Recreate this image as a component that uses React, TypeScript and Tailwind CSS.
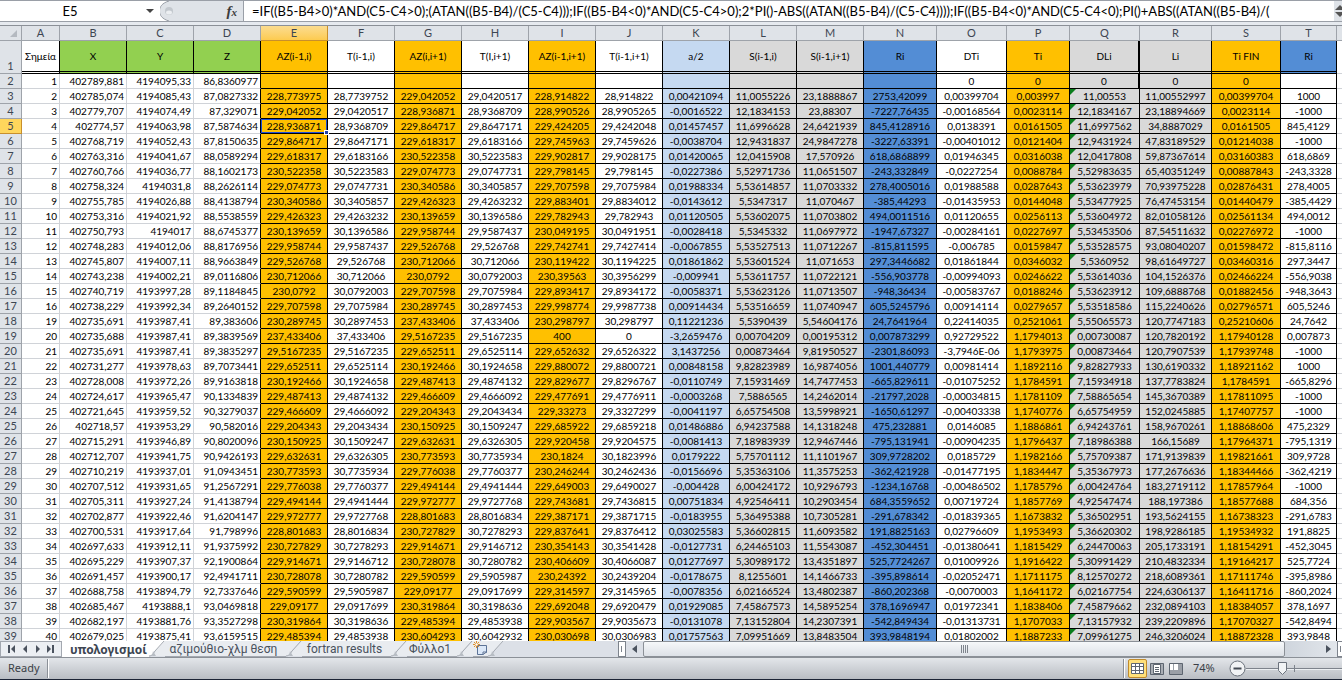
import { useState } from "react";
import clsx from "clsx";

type Column = {
  letter: string;
  title: string;
  width: string;
  fill: string;
  headFill: string;
  align: string;
};

const ORANGE = "bg-[#ffc000]";
const GREEN = "bg-[#92d050]";
const BLUE = "bg-[#538dd5]";
const PALE = "bg-[#c5d9f1]";
const GRAY = "bg-[#d9d9d9]";
const WHITE = "bg-white";

function col(letter: string, title: string, width: string, fill: string, headFill = fill, align = "text-center"): Column {
  return { letter, title, width, fill, headFill, align };
}

const columns: Column[] = [
  col("A", "Σημεία", "w-[38px]", WHITE, WHITE, "text-right"),
  col("B", "X", "w-[67px]", WHITE, GREEN, "text-right"),
  col("C", "Y", "w-[67px]", WHITE, GREEN, "text-right"),
  col("D", "Z", "w-[67px]", WHITE, GREEN, "text-right"),
  col("E", "AZ(i-1,i)", "w-[67px]", ORANGE),
  col("F", "T(i-1,i)", "w-[67px]", WHITE),
  col("G", "AZ(i,i+1)", "w-[67px]", ORANGE),
  col("H", "T(I,i+1)", "w-[67px]", WHITE),
  col("I", "AZ(i-1,i+1)", "w-[67px]", ORANGE),
  col("J", "T(i-1,i+1)", "w-[67px]", WHITE),
  col("K", "a/2", "w-[67px]", PALE),
  col("L", "S(i-1,i)", "w-[67px]", GRAY),
  col("M", "S(i-1,i+1)", "w-[67px]", GRAY),
  col("N", "Ri", "w-[73px]", BLUE),
  col("O", "DTi", "w-[70px]", WHITE),
  col("P", "Ti", "w-[63px]", ORANGE),
  col("Q", "DLi", "w-[70px]", GRAY),
  col("R", "Li", "w-[72px]", GRAY),
  col("S", "Ti FIN", "w-[69px]", ORANGE),
  col("T", "Ri", "w-[56px]", WHITE, BLUE),
];

// one line per sheet row, starting with row 2; "_" is an empty cell
const sheet = `
1 402789,881 4194095,33 86,8360977 _ _ _ _ _ _ _ _ _ _ 0 0 0 0 0 _
2 402785,074 4194085,43 87,0827332 228,773975 28,7739752 229,042052 29,0420517 228,914822 28,914822 0,00421094 11,0055226 23,1888867 2753,42099 0,00399704 0,003997 11,00553 11,00552997 0,00399704 1000
3 402779,707 4194074,49 87,329071 229,042052 29,0420517 228,936871 28,9368709 228,990526 28,9905265 -0,0016522 12,1834153 23,88307 -7227,76435 -0,00168564 0,0023114 12,1834167 23,18894669 0,0023114 -1000
4 402774,57 4194063,98 87,5874634 228,936871 28,9368709 229,864717 29,8647171 229,424205 29,4242048 0,01457457 11,6996628 24,6421939 845,4128916 0,0138391 0,0161505 11,6997562 34,8887029 0,0161505 845,4129
5 402768,719 4194052,43 87,8150635 229,864717 29,8647171 229,618317 29,6183166 229,745963 29,7459626 -0,0038704 12,9431837 24,9847278 -3227,63391 -0,00401012 0,0121404 12,9431924 47,83189529 0,01214038 -1000
6 402763,316 4194041,67 88,0589294 229,618317 29,6183166 230,522358 30,5223583 229,902817 29,9028175 0,01420065 12,0415908 17,570926 618,6868899 0,01946345 0,0316038 12,0417808 59,87367614 0,03160383 618,6869
7 402760,766 4194036,77 88,1602173 230,522358 30,5223583 229,074773 29,0747731 229,798145 29,798145 -0,0227386 5,52971736 11,0651507 -243,332849 -0,0227254 0,0088784 5,52983635 65,40351249 0,00887843 -243,3328
8 402758,324 4194031,8 88,2626114 229,074773 29,0747731 230,340586 30,3405857 229,707598 29,7075984 0,01988334 5,53614857 11,0703332 278,4005016 0,01988588 0,0287643 5,53623979 70,93975228 0,02876431 278,4005
9 402755,785 4194026,88 88,4138794 230,340586 30,3405857 229,426323 29,4263232 229,883401 29,8834012 -0,0143612 5,5347317 11,070467 -385,44293 -0,01435953 0,0144048 5,53477925 76,47453154 0,01440479 -385,4429
10 402753,316 4194021,92 88,5538559 229,426323 29,4263232 230,139659 30,1396586 229,782943 29,782943 0,01120505 5,53602075 11,0703802 494,0011516 0,01120655 0,0256113 5,53604972 82,01058126 0,02561134 494,0012
11 402750,793 4194017 88,6745377 230,139659 30,1396586 229,958744 29,9587437 230,049195 30,0491951 -0,0028418 5,5345332 11,0697972 -1947,67327 -0,00284161 0,0227697 5,53453506 87,54511632 0,02276972 -1000
12 402748,283 4194012,06 88,8176956 229,958744 29,9587437 229,526768 29,526768 229,742741 29,7427414 -0,0067855 5,53527513 11,0712267 -815,811595 -0,006785 0,0159847 5,53528575 93,08040207 0,01598472 -815,8116
13 402745,807 4194007,11 88,9663849 229,526768 29,526768 230,712066 30,712066 230,119422 30,1194225 0,01861862 5,53601524 11,071653 297,3446682 0,01861844 0,0346032 5,5360952 98,61649727 0,03460316 297,3447
14 402743,238 4194002,21 89,0116806 230,712066 30,712066 230,0792 30,0792003 230,39563 30,3956299 -0,009941 5,53611757 11,0722121 -556,903778 -0,00994093 0,0246622 5,53614036 104,1526376 0,02466224 -556,9038
15 402740,719 4193997,28 89,1184845 230,0792 30,0792003 229,707598 29,7075984 229,893417 29,8934172 -0,0058371 5,53623126 11,0713507 -948,36434 -0,00583767 0,0188246 5,53623912 109,6888768 0,01882456 -948,3643
16 402738,229 4193992,34 89,2640152 229,707598 29,7075984 230,289745 30,2897453 229,998774 29,9987738 0,00914434 5,53516659 11,0740947 605,5245796 0,00914114 0,0279657 5,53518586 115,2240626 0,02796571 605,5246
19 402735,691 4193987,41 89,383606 230,289745 30,2897453 237,433406 37,433406 230,298797 30,298797 0,11221236 5,5390439 5,54604176 24,7641964 0,22414035 0,2521061 5,55065573 120,7747183 0,25210606 24,7642
20 402735,688 4193987,41 89,3839569 237,433406 37,433406 29,5167235 29,5167235 400 0 -3,2659476 0,00704209 0,00195312 0,007873299 0,92729522 1,1794013 0,00730087 120,7820192 1,17940128 0,007873
21 402735,691 4193987,41 89,3835297 29,5167235 29,5167235 229,652511 29,6525114 229,652632 29,6526322 3,1437256 0,00873464 9,81950527 -2301,86093 -3,7946E-06 1,1793975 0,00873464 120,7907539 1,17939748 -1000
22 402731,277 4193978,63 89,7073441 229,652511 29,6525114 230,192466 30,1924658 229,880072 29,8800721 0,00848158 9,82823989 16,9874056 1001,440779 0,00981414 1,1892116 9,82827933 130,6190332 1,18921162 1000
23 402728,008 4193972,26 89,9163818 230,192466 30,1924658 229,487413 29,4874132 229,829677 29,8296767 -0,0110749 7,15931469 14,7477453 -665,829611 -0,01075252 1,1784591 7,15934918 137,7783824 1,1784591 -665,8296
24 402724,617 4193965,47 90,1334839 229,487413 29,4874132 229,466609 29,4666092 229,477691 29,4776911 -0,0003268 7,5886565 14,2462014 -21797,2028 -0,00034815 1,1781109 7,58865654 145,3670389 1,17811095 -1000
25 402721,645 4193959,52 90,3279037 229,466609 29,4666092 229,204343 29,2043434 229,33273 29,3327299 -0,0041197 6,65754508 13,5998921 -1650,61297 -0,00403338 1,1740776 6,65754959 152,0245885 1,17407757 -1000
26 402718,57 4193953,29 90,582016 229,204343 29,2043434 230,150925 30,1509247 229,685922 29,6859218 0,01486886 6,94237588 14,1318248 475,232881 0,0146085 1,1886861 6,94243761 158,9670261 1,18868606 475,2329
27 402715,291 4193946,89 90,8020096 230,150925 30,1509247 229,632631 29,6326305 229,920458 29,9204575 -0,0081413 7,18983939 12,9467446 -795,131941 -0,00904235 1,1796437 7,18986388 166,15689 1,17964371 -795,1319
28 402712,707 4193941,75 90,9426193 229,632631 29,6326305 230,773593 30,7735934 230,1824 30,1823996 0,0179222 5,75701112 11,1101967 309,9728202 0,0185729 1,1982166 5,75709387 171,9139839 1,19821661 309,9728
29 402710,219 4193937,01 91,0943451 230,773593 30,7735934 229,776038 29,7760377 230,246244 30,2462436 -0,0156696 5,35363106 11,3575253 -362,421928 -0,01477195 1,1834447 5,35367973 177,2676636 1,18344466 -362,4219
30 402707,512 4193931,65 91,2567291 229,776038 29,7760377 229,494144 29,4941444 229,649003 29,6490027 -0,004428 6,00424172 10,9296793 -1234,16768 -0,00486502 1,1785796 6,00424764 183,2719112 1,17857964 -1000
31 402705,311 4193927,24 91,4138794 229,494144 29,4941444 229,972777 29,9727768 229,743681 29,7436815 0,00751834 4,92546411 10,2903454 684,3559652 0,00719724 1,1857769 4,92547474 188,197386 1,18577688 684,356
32 402702,877 4193922,46 91,6204147 229,972777 29,9727768 228,801683 28,8016834 229,387171 29,3871715 -0,0183955 5,36495388 10,7305281 -291,678342 -0,01839365 1,1673832 5,36502951 193,5624155 1,16738323 -291,6783
33 402700,531 4193917,64 91,798996 228,801683 28,8016834 230,727829 30,7278293 229,837641 29,8376412 0,03025583 5,36602815 11,6093582 191,8825163 0,02796609 1,1953493 5,36620302 198,9286185 1,19534932 191,8825
34 402697,633 4193912,11 91,9375992 230,727829 30,7278293 229,914671 29,9146712 230,354143 30,3541428 -0,0127731 6,24465103 11,5543087 -452,304451 -0,01380641 1,1815429 6,24470063 205,1733191 1,18154291 -452,3045
35 402695,229 4193907,37 92,1900864 229,914671 29,9146712 230,728078 30,7280782 230,406609 30,4066087 0,01277697 5,30989172 13,4351897 525,7724267 0,01009926 1,1916422 5,30991429 210,4832334 1,19164217 525,7724
36 402691,457 4193900,17 92,4941711 230,728078 30,7280782 229,590599 29,5905987 230,24392 30,2439204 -0,0178675 8,1255601 14,1466733 -395,898614 -0,02052471 1,1711175 8,12570272 218,6089361 1,17111746 -395,8986
37 402688,758 4193894,79 92,7337646 229,590599 29,5905987 229,09177 29,0917699 229,314597 29,3145965 -0,0078356 6,02166524 13,4802387 -860,202368 -0,0070003 1,1641172 6,02167754 224,6306137 1,16411716 -860,2024
38 402685,467 4193888,1 93,0469818 229,09177 29,0917699 230,319864 30,3198636 229,692048 29,6920479 0,01929085 7,45867573 14,5895254 378,1696947 0,01972341 1,1838406 7,45879662 232,0894103 1,18384057 378,1697
39 402682,197 4193881,76 93,3527298 230,319864 30,3198636 229,485394 29,4853938 229,903567 29,9035673 -0,0131078 7,13152804 14,2307391 -542,849434 -0,01313731 1,1707033 7,13157932 239,2209896 1,17070327 -542,8494
40 402679,025 4193875,41 93,6159515 229,485394 29,4853938 230,604293 30,6042932 230,030698 30,0306983 0,01757563 7,09951669 13,8483504 393,9848194 0,01802002 1,1887233 7,09961275 246,3206024 1,18872328 393,9848
`;

const rows = sheet
  .trim()
  .split("\n")
  .map((line) => line.split(" ").map((v) => (v === "_" ? "" : v)));

const FORMULA =
  "=IF((B5-B4>0)*AND(C5-C4>0);(ATAN((B5-B4)/(C5-C4)));IF((B5-B4<0)*AND(C5-C4>0);2*PI()-ABS((ATAN((B5-B4)/(C5-C4))));IF((B5-B4<0)*AND(C5-C4<0);PI()+ABS((ATAN((B5-B4)/(";

function FormulaBar() {
  const [cell, setCell] = useState("E5");
  const [formula, setFormula] = useState(FORMULA);

  return (
    <div className="flex h-[26px] shrink-0 flex-col border-b border-[#8b9097] bg-[#e6eaef]">
      <div className="flex h-[22px] border-y border-[#9a9fa7] bg-[#dfe3e8] font-['Lato',sans-serif] text-[13px] leading-5 text-black">
        <div className="flex w-[160px] items-center bg-white">
          <input
            aria-label="Name box"
            value={cell}
            onChange={(e) => setCell(e.target.value)}
            className="w-[140px] bg-transparent text-center outline-none"
          />
          <button type="button" aria-label="Names" className="flex h-5 w-5 items-center justify-center">
            <svg width="8" height="4"><path d="M0 0h8L4 4z" fill="#444" /></svg>
          </button>
        </div>
        <div className="flex w-[84px] items-center justify-between border-r border-[#9a9fa7]">
          <svg width="20" height="20" viewBox="0 0 20 20">
            <path d="M0 0H9C2 2 0 5 0 10s2 8 9 10H0z" fill="#fff" />
            <path d="M9 0C2 2 -.5 6 -.5 10S2 18 9 20" fill="none" stroke="#9a9fa7" />
            <circle cx="9" cy="10" r="4" fill="#c3c8ce" />
            <ellipse cx="9" cy="11.500" rx="3" ry="2" fill="#eceff2" />
          </svg>
          <button type="button" aria-label="Insert function" className="pr-1.5 font-['Liberation_Serif',serif] text-[15px] font-bold italic leading-5 text-[#3c3c3c]">
            f<span className="text-[11px]">x</span>
          </button>
        </div>
        <input
          aria-label="Formula"
          value={formula}
          onChange={(e) => setFormula(e.target.value)}
          className="min-w-0 flex-1 bg-white pl-2 outline-none"
        />
        <div className="flex w-2 flex-col items-end justify-between bg-[#dfe3e8] py-1">
          <svg width="7" height="5"><path d="M0 5h10L5 0z" fill="#555" /></svg>
          <svg width="7" height="5"><path d="M0 0h10L5 5z" fill="#555" /></svg>
        </div>
      </div>
    </div>
  );
}

function Selection() {
  return (
    <div className="pointer-events-none absolute inset-0 border border-[#1f4fd8]">
      <span className="absolute -right-[3px] -bottom-[3px] size-[5px] border border-white bg-[#1f3fa8]" />
    </div>
  );
}

function Grid() {
  return (
    <table className="w-full table-fixed border-separate border-spacing-0 font-['Lato',sans-serif] text-[10px] leading-[14px] text-black">
      <colgroup>
        <col className="w-[22px]" />
        {columns.map((c) => <col key={c.letter} className={c.width} />)}
        <col />
      </colgroup>
      <thead className="text-[11px] text-[#3d4652]">
        <tr className="h-[15px]">
          <td className="border-r border-b border-[#9ea3aa] bg-[#dfe3e8] p-0">
            <svg className="ml-auto mr-1 block" width="7" height="7"><path d="M7 0v7H0z" fill="#b4b9c0" /></svg>
          </td>
          {columns.map((c) => (
            <th
              key={c.letter}
              scope="col"
              className={clsx(
                "border-r border-b p-0 font-normal",
                c.letter === "E"
                  ? "border-[#c88f2c] bg-linear-to-b from-[#fbdc8f] to-[#fdcb4e]"
                  : "border-[#9ea3aa] bg-[#dfe3e8]"
              )}
            >
              {c.letter}
            </th>
          ))}
          <th className="border-b border-[#9ea3aa] bg-[#dfe3e8] p-0" />
        </tr>
      </thead>
      <tbody>
        {/* Titles */}
        <tr className="h-[33px]">
          <th scope="row" className="border-r border-b border-[#9ea3aa] bg-[#dfe3e8] p-0 align-bottom text-[11px] font-normal text-[#3d4652]">1</th>
          {columns.map((c) => (
            <td
              key={c.letter}
              className={clsx(
                "border-b-3 border-double border-black p-0 text-center whitespace-nowrap",
                c.letter === "Q" ? "border-r-2 [border-right-style:solid]" : "border-r [border-right-style:solid]",
                c.headFill
              )}
            >
              {c.title}
            </td>
          ))}
          <td className="border-b border-[#d0d3d8] bg-white p-0" />
        </tr>
        {rows.map((values, r) => {
          const n = r + 2;
          return (
            <tr key={n} className="h-[15px]">
              <th
                scope="row"
                className={clsx(
                  "border-r border-b p-0 text-[11px] font-normal text-[#3d4652]",
                  n === 5 ? "border-[#c88f2c] bg-[#ffd65c]" : "border-[#9ea3aa] bg-[#dfe3e8]"
                )}
              >
                {n}
              </th>
              {columns.map((c, i) => (
                <td
                  key={c.letter}
                  className={clsx(
                    "relative border-r border-b p-0 whitespace-nowrap",
                    c.fill,
                    c.align,
                    i < 4 && "border-b-[#d0d3d8] pr-0.5",
                    i < 3 && "border-r-[#d0d3d8]",
                    i === 3 && "border-r-black",
                    i > 3 && "border-black",
                    c.letter === "Q" && n === 2 && "border-r-2",
                    c.letter === "E" && n === 5 && "z-10"
                  )}
                >
                  {values[i]}
                  {c.letter === "Q" && n > 2 && (
                    <svg className="absolute top-0 left-0" width="6" height="6"><path d="M0 0h6L0 6z" fill="#0a7d1c" /></svg>
                  )}
                  {c.letter === "E" && n === 5 && <Selection />}
                </td>
              ))}
              <td className="border-b border-[#d0d3d8] bg-white p-0" />
            </tr>
          );
        })}
      </tbody>
    </table>
  );
}

function Slant({ left, right }: { left: string; right: string }) {
  return (
    <svg className="block h-4 w-4 shrink-0" viewBox="0 0 16 16">
      <path d="M0 0H16L2 15H0z" fill={left} />
      <path d="M16 0V15H2z" fill={right} />
      <path d="M0 15C3 15 4 13 6 10L15 0" fill="none" stroke="#a3a8b0" />
      <path d="M4 10L7 15H3z" fill="#b8bdc4" />
    </svg>
  );
}

const navIcons = [
  { label: "First sheet", d: "M0 0h2v8H0zM7 0v8L3 4z" },
  { label: "Previous sheet", d: "M6 0v8L2 4z" },
  { label: "Next sheet", d: "M2 0v8l4-4z" },
  { label: "Last sheet", d: "M0 0v8l4-4zM5 0h2v8H5z" },
];

function SheetTabs() {
  const tab = "h-4 shrink-0 border-b border-[#a3a8b0] bg-[#e9ecf0] font-['Roboto',sans-serif] leading-[15px] text-[#4a525e]";
  return (
    <div className="flex h-4 shrink-0 overflow-hidden bg-[#dce0e7] font-['Noto_Sans',sans-serif] text-xs">
      <div className="flex w-[62px] shrink-0 items-center justify-around border border-[#a3a8b0] bg-[#eceff3] px-1">
        {navIcons.map((icon) => (
          <button key={icon.label} type="button" aria-label={icon.label}>
            <svg className="block" width="7" height="8"><path d={icon.d} fill="#4a525e" /></svg>
          </button>
        ))}
      </div>
      <button type="button" className="h-4 w-[87px] shrink-0 bg-white pl-1.5 leading-[15px] font-bold text-[#3d4652]">υπολογισμοί</button>
      <Slant left="#fff" right="#e9ecf0" />
      <button type="button" className={clsx(tab, "w-[121px] pt-px pr-1")}>αζιμούθιο-χλμ θεση</button>
      <Slant left="#e9ecf0" right="#e9ecf0" />
      <button type="button" className={clsx(tab, "w-[89px] pt-px pr-1")}>fortran results</button>
      <Slant left="#e9ecf0" right="#e9ecf0" />
      <button type="button" className={clsx(tab, "w-[50px] pt-px pr-1")}>Φύλλο1</button>
      <Slant left="#e9ecf0" right="#e9ecf0" />
      <button type="button" aria-label="Insert sheet" className={clsx(tab, "w-[15px]")}>
        <svg className="block" width="15" height="15" viewBox="0 0 15 15">
          <path d="M4.500 4.500h9v7h-2.500l-1 2h-5.500z" fill="#dce8f8" stroke="#5c7396" />
          <path d="M10 13.500v-2.500h3.500z" fill="#fff" stroke="#5c7396" />
          <path d="M3.500 0v7M0 3.500h7M1 1l5 5M6 1L1 6" stroke="#e0902a" />
          <circle cx="3.500" cy="3.500" r="1.200" fill="#fff" />
        </svg>
      </button>
      <Slant left="#e9ecf0" right="#dce0e7" />
      <div className="w-[114px] shrink-0" />
      <div className="w-2 shrink-0 border border-[#7d838c] bg-white px-0.5 py-1"><div className="h-full w-px bg-[#7d838c]" /></div>

      {/* Horizontal scroll bar */}
      <button type="button" aria-label="Scroll left" className="flex w-[17px] shrink-0 items-center justify-center">
        <svg width="5" height="8"><path d="M5 0v8L0 4z" fill="#4a525e" /></svg>
      </button>
      <div className="flex flex-1 items-center justify-center gap-px rounded-xs border border-[#8b9097] bg-linear-to-b from-[#f6f8fa] to-[#dde1e7]">
        {[0, 1, 2, 3].map((i) => <span key={i} className="h-2 w-px bg-[#7d838c]" />)}
      </div>
      <div className="flex w-[52px] shrink-0 items-center justify-end bg-linear-to-r from-[#cfd5dd] to-[#e2e6eb] pr-1.5">
        <button type="button" aria-label="Scroll right">
          <svg className="block" width="5" height="8"><path d="M0 0v8l5-4z" fill="#4a525e" /></svg>
        </button>
      </div>
      <div className="w-[5px] shrink-0 border-y border-l border-[#7d838c] bg-white px-0.5 py-1"><div className="h-full w-px bg-[#7d838c]" /></div>
    </div>
  );
}

function StatusBar() {
  const [zoom, setZoom] = useState(74);
  return (
    <div className="flex h-[23px] shrink-0 items-center border-t border-b border-t-[#8b9097] border-b-[#1c2436] bg-linear-to-b from-[#e3e6ea] to-[#b9bdc3] font-['Noto_Sans',sans-serif] text-[11px] text-[#3a3f47]">
      <span className="w-[47px] pl-2">Ready</span>
      <span className="h-[19px] w-0.5 border-l border-r border-l-[#8b9097] border-r-white" />
      <div className="flex-1" />
      <span className="h-[19px] w-0.5 border-l border-r border-l-[#8b9097] border-r-white" />
      <div className="flex items-center pl-[3px]">
        <button type="button" aria-label="Normal" className="flex h-[19px] w-[19px] items-center justify-center rounded-xs border border-[#c08a2c] bg-[#ffe07a]">
          <svg width="13" height="11" viewBox="0 0 13 11">
            <path d="M.5.500h12v10H.5zM.5 3.500h12M.5 7.500h12M4.500.500v10M8.500.500v10" fill="#fff" stroke="#5d6570" />
          </svg>
        </button>
        <button type="button" aria-label="Page layout" className="flex w-[19px] items-center justify-center">
          <svg width="14" height="12" viewBox="0 0 14 12">
            <path d="M.5.500h13v11H.5z" fill="#a9aeb5" stroke="#5d6570" />
            <path d="M3.500 1.500h7v9h-7z" fill="#fff" stroke="#5d6570" />
            <path d="M5 4.500h4M5 6.500h4M5 8.500h4" stroke="#5d6570" />
          </svg>
        </button>
        <button type="button" aria-label="Page break preview" className="flex w-[19px] items-center justify-center">
          <svg width="14" height="12" viewBox="0 0 14 12">
            <path d="M.5.500h13v11H.5z" fill="#9a9fa7" stroke="#5d6570" />
            <path d="M1 1h3v6H1zM5 1h4v6H5z" fill="#fff" />
          </svg>
        </button>
      </div>
      <button type="button" className="w-[44px] pl-2 text-left">{zoom}%</button>
      <button type="button" aria-label="Zoom out" onClick={() => setZoom(Math.max(10, zoom - 10))}>
        <svg className="block" width="17" height="17" viewBox="0 0 17 17">
          <circle cx="8.500" cy="8.500" r="7.500" fill="#f1f3f5" stroke="#6b727c" />
          <path d="M4.500 8.500h8" stroke="#444b55" strokeWidth="2" />
        </svg>
      </button>
      <div className="relative h-[17px] w-[96px]">
        <svg className="block" width="96" height="17" viewBox="0 0 96 17">
          <path d="M0 8.500h96" stroke="#7d838c" />
          <path d="M0 9.500h96" stroke="#eceff2" />
          <path d="M48.500 5v7" stroke="#7d838c" />
          <path d="M32.500 2.500h8v8l-4 4-4-4z" fill="#f1f3f5" stroke="#6b727c" />
        </svg>
        <input
          type="range"
          aria-label="Zoom"
          min={10}
          max={190}
          value={zoom}
          onChange={(e) => setZoom(Number(e.target.value))}
          className="absolute inset-0 w-full opacity-0"
        />
      </div>
    </div>
  );
}

export default function App() {
  return (
    <div className="flex h-screen flex-col overflow-hidden bg-white">
      <FormulaBar />
      <div className="min-h-0 flex-1 overflow-hidden">
        <Grid />
      </div>
      <SheetTabs />
      <StatusBar />
    </div>
  );
}
